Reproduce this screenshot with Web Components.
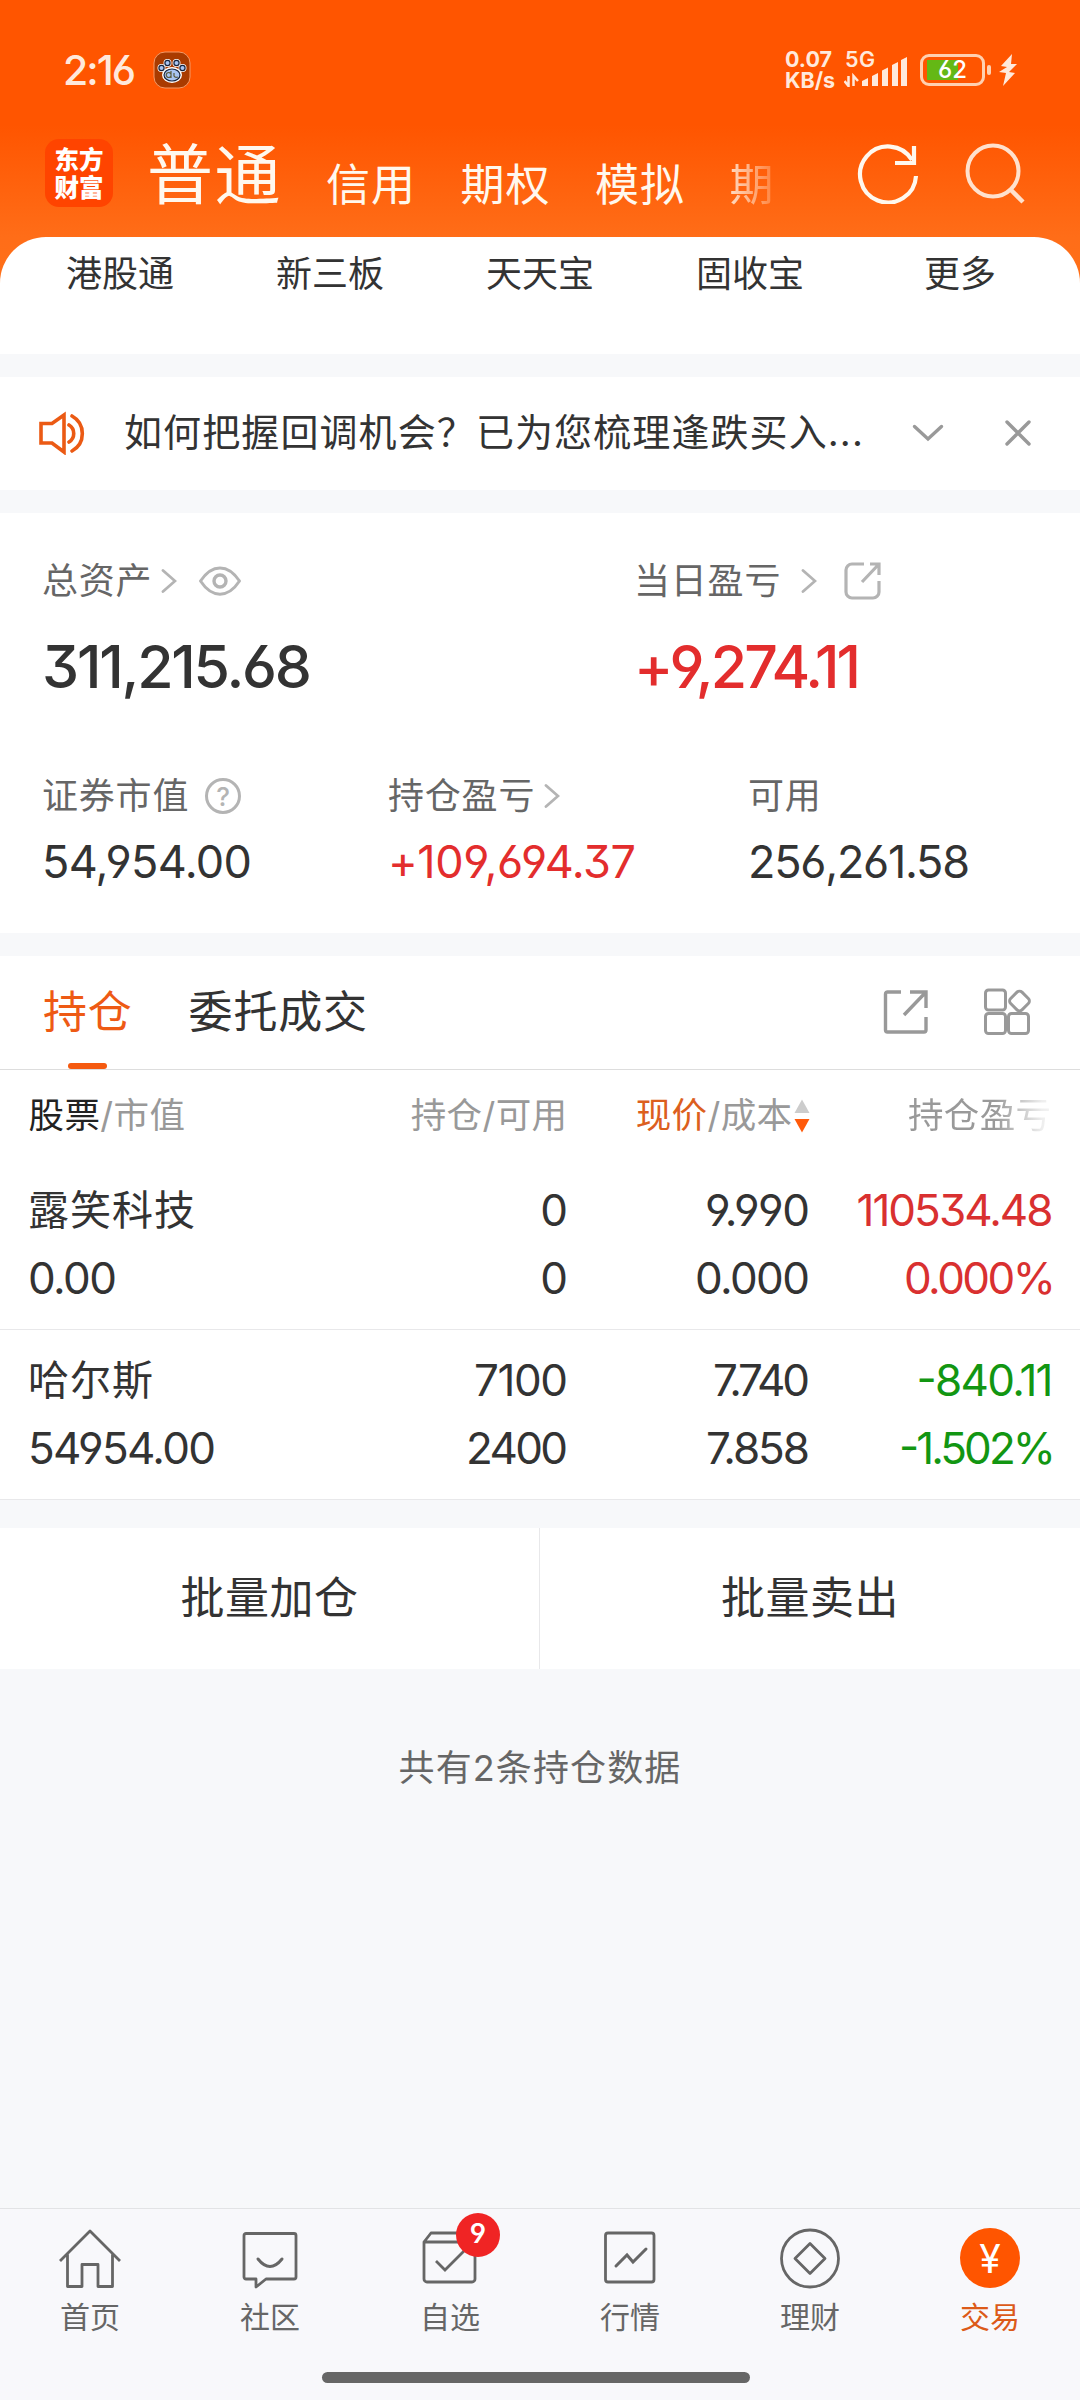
<!DOCTYPE html>
<html lang="zh-CN">
<head>
<meta charset="UTF-8">
<title>交易</title>
<style>
    html, body {
        margin: 0;
        padding: 0;
    }
    body {
        width: 1080px;
        height: 2400px;
        overflow: hidden;
        background: #f7f8fa;
        color: #333;
        font-family: Inter, "Noto Sans CJK SC", sans-serif;
        font-feature-settings: "cv03", "cv04", "cv09", "calt" 0;
    }
</style>
</head>
<body>
<trade-page></trade-page>

<script>
// Text that spreads its letters over a given width
class FitText extends HTMLElement {
    connectedCallback() {
        this.attachShadow({ mode: 'open' });
        this.shadowRoot.innerHTML = `
            <style>
                :host { display: inline-block; white-space: nowrap; }
                span { display: inline-block; }
            </style>
            <span><slot></slot></span>
        `;
        const width = Number(this.getAttribute('w'));
        const span = this.shadowRoot.querySelector('span');
        const count = this.textContent.length;
        if (width && count > 1) {
            const gap = (width - span.getBoundingClientRect().width) / (count - 1);
            span.style.letterSpacing = gap + 'px';
            span.style.marginRight = -gap + 'px';
        }
    }
}
customElements.define('fit-text', FitText);

const ICONS = {
    refresh: [62, 62, `<path d="M59 34A28 28 0 1 1 55 18M57 4V21H38" stroke-width="4.2"/>`],
    search: [62, 62, `<circle cx="28" cy="28" r="25.5" stroke-width="4"/><path d="M46 47L58 59" stroke-width="4.5"/>`],
    speaker: [50, 44, `<path d="M4 12.5H15L27 4V41L15 32H4ZM32 14A10 10 0 0 1 32 31M35 5A20 20 0 0 1 35 40" stroke-width="3.6" stroke-linecap="round"/>`],
    down: [32, 18, `<path d="M2.5 2.5L16 15L29.5 2.5" stroke-width="3.4" stroke-linecap="round"/>`],
    close: [28, 28, `<path d="M3 3L25 25M25 3L3 25" stroke-width="3.4" stroke-linecap="round"/>`],
    right: [16, 26, `<path d="M2 2.5L14 13L2 23.5" stroke-width="2.8" stroke-linecap="round"/>`],
    eye: [44, 32, `<path d="M2.5 16C14 -1.5 30 -1.5 41.5 16C30 33.5 14 33.5 2.5 16Z" stroke-width="3" stroke-linejoin="round"/><circle cx="22" cy="16" r="6" stroke-width="3.4"/>`],
    share: [38, 38, `<path d="M20 2H8A6 6 0 0 0 2 8V30A6 6 0 0 0 8 36H29A6 6 0 0 0 35 30V19M26 2H35V13M35 2L18 20" stroke-width="3.2"/>`],
    export: [46, 46, `<path d="M18 3H5A2 2 0 0 0 2.5 5V41A2 2 0 0 0 4.5 43H41A2 2 0 0 0 43 41V28M27 3H43V19M43 3L21 26" stroke-width="3.4"/>`],
    apps: [50, 50, `<g stroke-width="3"><rect x="3.5" y="3" width="20" height="20" rx="3"/><rect x="3.5" y="26.5" width="20" height="20" rx="3"/><rect x="26.5" y="26.5" width="20" height="20" rx="3"/><rect x="29.5" y="6" width="16" height="16" rx="3.5" transform="rotate(45 37.5 14)"/></g>`],
    sort: [16, 34, `<path d="M8 0.5L15.5 14H0.5Z" fill="#ccc" stroke="none"/><path d="M8 33.5L15.5 20H0.5Z" fill="#ff5a0a" stroke="none"/>`],
    home: [64, 64, `<path d="M2 35L32 5L62 35M9.5 28.5V60.5H24V38.5H40V60.5H54.5V28.5" stroke-linejoin="round"/>`],
    chat: [64, 64, `<path d="M8 7.5H56A2 2 0 0 1 58 9.5V51A2 2 0 0 1 56 53H28L18 61V53H8A2 2 0 0 1 6 51V9.5A2 2 0 0 1 8 7.5Z" stroke-linejoin="round"/><path d="M20 33Q32 48 44 33" stroke-width="3" stroke-linecap="round"/>`],
    pick: [64, 64, `<path d="M6 16H57V53A3 3 0 0 1 54 56H9A3 3 0 0 1 6 53ZM6 16L13 7H51L57 16" stroke-linejoin="round"/><path d="M18 35L27 44L46 25"/>`],
    chart: [64, 64, `<rect x="7.5" y="7" width="48.5" height="49" rx="2.5"/><path d="M18 40L29 29L35 36L48 23" stroke-width="3" stroke-linecap="round"/>`],
    wealth: [64, 64, `<circle cx="32" cy="32.5" r="28.5"/><path d="M32 17.5L47 32.5L32 47.5L17 32.5Z" stroke-linejoin="round"/>`],
    paw: [38, 38, `<rect x="1" y="1" width="36" height="36" rx="11" fill="#a93b00" stroke="#f39a68" stroke-width="1"/><g fill="#fff" stroke="#fff" stroke-width="4"><circle cx="8.5" cy="17" r="2"/><circle cx="14.5" cy="12" r="2"/><circle cx="23.5" cy="12" r="2"/><circle cx="29.5" cy="17" r="2"/><ellipse cx="19" cy="24" rx="8" ry="6"/></g><g fill="#a9c5f2" stroke="#17233c" stroke-width="1.2"><circle cx="8.500" cy="17" r="2.6"/><circle cx="14.5" cy="12" r="2.6"/><circle cx="23.5" cy="12" r="2.6"/><circle cx="29.5" cy="17" r="2.6"/><ellipse cx="19" cy="24" rx="8" ry="6"/></g><path d="M18 20V27M18 25A2.5 2.5 0 1 1 18 23M21 22V25Q22 27 25 26" stroke="#5a5a3c" stroke-width="1.2"/>`],
    signal: [64, 34, `<path d="M4.5 23V33L0.5 28M9.5 33V23L14 28" stroke-width="2.5"/><g fill="currentColor" stroke="none"><path d="M18 28L24 25V33H18ZM28 23L34 20V33H28ZM38 17.5L44 14.5V33H38ZM48 12L54 9V33H48ZM57 7L63 4V33H57Z"/></g>`],
    bolt: [20, 32, `<path d="M14 0L3 12L9 13L1 18L8 19L5 32L17 19L11 18L19 10L13 10Z" fill="currentColor" stroke="none"/>`]
};

class AppIcon extends HTMLElement {
    connectedCallback() {
        const [width, height, shape] = ICONS[this.getAttribute('name')];
        this.attachShadow({ mode: 'open' });
        this.shadowRoot.innerHTML = `
            <style>
                :host { display: block; flex: none; width: ${width}px; height: ${height}px; }
                svg { display: block; }
            </style>
            <svg width="${width}" height="${height}" viewBox="0 0 ${width} ${height}" fill="none" stroke="currentColor" stroke-width="2.8">${shape}</svg>
        `;
    }
}
customElements.define('app-icon', AppIcon);

class StatusBar extends HTMLElement {
    connectedCallback() {
        this.attachShadow({ mode: 'open' });
        this.shadowRoot.innerHTML = `
            <style>
                :host {
                    display: flex;
                    align-items: center;
                    height: 36px;
                    padding: 52px 62px 0 63px;
                    color: #ffe9dc;
                    line-height: 1;
                }
                .time { font-size: 41px; font-weight: 500; }
                .paw { margin-left: 17px; }
                .speed {
                    display: flex;
                    flex-direction: column;
                    margin-left: auto;
                    font-size: 21.5px;
                    font-weight: 700;
                    line-height: 21.5px;
                }
                .net {
                    display: grid;
                    margin-left: 9px;
                    width: 66px;
                }
                .net > * { grid-area: 1 / 1; }
                .net fit-text { font-size: 21.5px; font-weight: 600; margin: -4px 0 0 1px; }
                .battery {
                    display: flex;
                    align-items: center;
                    justify-content: center;
                    box-sizing: border-box;
                    width: 65px;
                    height: 32px;
                    margin-left: 10px;
                    border: 3px solid #ffd0b0;
                    border-radius: 9px;
                    background: linear-gradient(#64b815, #64b815) 4px 3px / 31px 20px no-repeat;
                    color: #fff;
                    font-size: 24px;
                    font-weight: 500;
                }
                .nub {
                    width: 4px;
                    height: 10px;
                    margin: 0 7px 0 2px;
                    border-radius: 2px;
                    background: #ffd0b0;
                }
            </style>
            <fit-text class="time" w="73">2:16</fit-text>
            <app-icon class="paw" name="paw"></app-icon>
            <div class="speed"><fit-text w="47">0.07</fit-text><fit-text w="50">KB/s</fit-text></div>
            <div class="net"><fit-text w="30">5G</fit-text><app-icon name="signal"></app-icon></div>
            <div class="battery"><fit-text w="29">62</fit-text></div>
            <div class="nub"></div>
            <app-icon name="bolt"></app-icon>
        `;
    }
}
customElements.define('status-bar', StatusBar);

class TopNav extends HTMLElement {
    connectedCallback() {
        this.attachShadow({ mode: 'open' });
        this.shadowRoot.innerHTML = `
            <style>
                :host {
                    display: flex;
                    align-items: flex-start;
                    height: 98px;
                    padding: 51px 53px 0 45px;
                    color: #fff8ee;
                }
                .logo {
                    width: 68px;
                    height: 61px;
                    padding-top: 7px;
                    border-radius: 14px;
                    background: #ff4400;
                    color: #fff;
                    font-size: 24.5px;
                    font-weight: 900;
                    line-height: 28px;
                    text-align: center;
                }
                nav {
                    display: flex;
                    align-items: flex-start;
                    width: 622px;
                    margin: -13px 0 0 34px;
                    white-space: nowrap;
                    font-size: 44px;
                    letter-spacing: 1px;
                    line-height: 98px;
                }
                .active { font-size: 66px; letter-spacing: 1.5px; margin-right: 44px; }
                .tab { margin: 10px 44.5px 0 0; }
                .cut {
                    margin-top: 10px;
                    background: linear-gradient(90deg, rgba(255, 248, 238, .8), rgba(255, 248, 238, .2));
                    -webkit-background-clip: text;
                    background-clip: text;
                    color: transparent;
                }
                .refresh { margin: 3px 0 0 88px; }
                .search { margin: 4px 0 0 auto; color: #ffe1cd; }
            </style>
            <div class="logo">东方<br>财富</div>
            <nav>
                <span class="active">普通</span>
                <span class="tab">信用</span>
                <span class="tab">期权</span>
                <span class="tab">模拟</span>
                <span class="cut">期</span>
            </nav>
            <app-icon class="refresh" name="refresh"></app-icon>
            <app-icon class="search" name="search"></app-icon>
        `;
    }
}
customElements.define('top-nav', TopNav);

class QuickMenu extends HTMLElement {
    connectedCallback() {
        this.attachShadow({ mode: 'open' });
        this.shadowRoot.innerHTML = `
            <style>
                :host {
                    display: grid;
                    grid-template-columns: repeat(5, 1fr);
                    height: 98px;
                    padding: 19px 15px 0;
                    border-radius: 46px 46px 0 0;
                    background: #fff;
                    font-size: 36px;
                    line-height: 36px;
                    text-align: center;
                }
            </style>
            <span>港股通</span><span>新三板</span><span>天天宝</span><span>固收宝</span><span>更多</span>
        `;
    }
}
customElements.define('quick-menu', QuickMenu);

class NoticeBar extends HTMLElement {
    connectedCallback() {
        this.attachShadow({ mode: 'open' });
        this.shadowRoot.innerHTML = `
            <style>
                :host {
                    display: flex;
                    align-items: center;
                    height: 111px;
                    margin: 23px 0;
                    padding: 0 48px 2px 37px;
                    background: #fff;
                    color: #999;
                }
                .speaker { color: #eb5a14; }
                .text {
                    width: 744px;
                    margin: -2px 0 0 37px;
                    color: #333;
                    font-size: 38px;
                    letter-spacing: 1.1px;
                    line-height: 56px;
                    white-space: nowrap;
                }
                .down { margin-left: auto; }
                .close { margin-left: 60px; }
            </style>
            <app-icon class="speaker" name="speaker"></app-icon>
            <span class="text"><slot></slot></span>
            <app-icon class="down" name="down"></app-icon>
            <app-icon class="close" name="close"></app-icon>
        `;
    }
}
customElements.define('notice-bar', NoticeBar);

class AssetItem extends HTMLElement {
    connectedCallback() {
        this.attachShadow({ mode: 'open' });
        this.shadowRoot.innerHTML = `
            <style>
                :host { display: block; }
                .label {
                    display: flex;
                    align-items: center;
                    height: 40px;
                    color: #666;
                    font-size: 36px;
                    line-height: 40px;
                    letter-spacing: .8px;
                }
                .value {
                    display: block;
                    margin-top: 26px;
                    font-size: 45px;
                    line-height: 40px;
                }
                :host([big]) .value {
                    margin-top: 41px;
                    font-size: 59px;
                    font-weight: 500;
                    line-height: 50px;
                }
                :host([up]) .value { color: #e32d2d; }
            </style>
            <div class="label">${this.getAttribute('label')}<slot></slot></div>
            <fit-text class="value" w="${this.getAttribute('w')}">${this.getAttribute('value')}</fit-text>
        `;
    }
}
customElements.define('asset-item', AssetItem);

class AssetPanel extends HTMLElement {
    connectedCallback() {
        this.attachShadow({ mode: 'open' });
        this.shadowRoot.innerHTML = `
            <style>
                :host {
                    display: block;
                    height: 372px;
                    padding: 48px 0 0 42px;
                    background: #fff;
                }
                .row { display: grid; }
                .total { grid-template-columns: 592px 1fr; }
                .detail { grid-template-columns: 346px 360px 1fr; margin-top: 84px; }
                app-icon { color: #b4b4b4; }
                .near { margin-left: 9px; }
                .eye { margin-left: 21px; }
                .far { margin-left: 20px; }
                .share { margin-left: 27px; }
                .help {
                    box-sizing: border-box;
                    width: 36px;
                    height: 36px;
                    margin-left: 16px;
                    border: 3px solid #b4b4b4;
                    border-radius: 50%;
                    color: #b4b4b4;
                    font-size: 26px;
                    font-weight: 500;
                    line-height: 31px;
                    letter-spacing: 0;
                    text-align: center;
                }
            </style>
            <div class="row total">
                <asset-item big label="总资产" value="311,215.68" w="270">
                    <app-icon class="near" name="right"></app-icon>
                    <app-icon class="eye" name="eye"></app-icon>
                </asset-item>
                <asset-item big up label="当日盈亏" value="+9,274.11" w="227">
                    <app-icon class="far" name="right"></app-icon>
                    <app-icon class="share" name="share"></app-icon>
                </asset-item>
            </div>
            <div class="row detail">
                <asset-item label="证券市值" value="54,954.00" w="210"><span class="help">?</span></asset-item>
                <asset-item up label="持仓盈亏" value="+109,694.37" w="248"><app-icon class="near" name="right"></app-icon></asset-item>
                <asset-item label="可用" value="256,261.58" w="222"></asset-item>
            </div>
        `;
    }
}
customElements.define('asset-panel', AssetPanel);

class PositionTabs extends HTMLElement {
    connectedCallback() {
        this.attachShadow({ mode: 'open' });
        this.shadowRoot.innerHTML = `
            <style>
                :host {
                    display: flex;
                    align-items: center;
                    box-sizing: border-box;
                    height: 114px;
                    margin-top: 23px;
                    padding: 0 48px 0 43px;
                    border-bottom: 1px solid #ddd;
                    background: #fff;
                    font-size: 44px;
                    letter-spacing: .8px;
                }
                .active { margin-right: 56px; color: #ee5a14; }
                .active::after {
                    content: "";
                    display: block;
                    width: 39px;
                    height: 6px;
                    margin: -6px auto 0;
                    border-radius: 3px;
                    background: #f55a10;
                }
                .active span, .tab { display: block; height: 113px; line-height: 113px; }
                app-icon { color: #999; margin-top: -2px; }
                .export { margin-left: auto; }
                .apps { margin-left: 53px; }
            </style>
            <div class="active"><span>持仓</span></div>
            <div class="tab">委托成交</div>
            <app-icon class="export" name="export"></app-icon>
            <app-icon class="apps" name="apps"></app-icon>
        `;
    }
}
customElements.define('position-tabs', PositionTabs);

class PositionRow extends HTMLElement {
    connectedCallback() {
        const cell = (name) => {
            const [text, width] = this.getAttribute(name).split('|');
            return `<fit-text w="${width || ''}">${text}</fit-text>`;
        };
        this.attachShadow({ mode: 'open' });
        this.shadowRoot.innerHTML = `
            <style>
                :host {
                    display: grid;
                    grid-template-columns: 300px 1fr 242px 242px;
                    grid-template-rows: 68px 68px;
                    box-sizing: border-box;
                    height: 170px;
                    padding: 16px 28px 0 28px;
                    border-bottom: 1px solid #e8e8ea;
                    background: #fff;
                    font-size: 44px;
                    line-height: 68px;
                    text-align: right;
                }
                .left { text-align: left; }
                .name { font-size: 41px; letter-spacing: 1px; line-height: 68px; }
                .gain {
                    margin-right: -1.5px;
                    color: #d93030;
                    font-feature-settings: "cv03", "cv04", "cv09", "calt" 0, "case";
                }
                .rate { margin-right: -4px; }
                :host([down]) .gain { color: #129612; }
            </style>
            <div class="left name">${this.getAttribute('name')}</div>
            <div>${cell('held')}</div>
            <div>${cell('price')}</div>
            <div class="gain">${cell('gain')}</div>
            <div class="left">${cell('worth')}</div>
            <div>${cell('usable')}</div>
            <div>${cell('cost')}</div>
            <div class="gain rate">${cell('rate')}</div>
        `;
    }
}
customElements.define('position-row', PositionRow);

class PositionTable extends HTMLElement {
    connectedCallback() {
        this.attachShadow({ mode: 'open' });
        this.shadowRoot.innerHTML = `
            <style>
                :host { display: block; background: #fff; }
                .head {
                    display: grid;
                    grid-template-columns: 300px 1fr 242px 242px;
                    height: 89px;
                    padding: 1px 28.5px 0;
                    color: #999;
                    font-size: 35.5px;
                    letter-spacing: .4px;
                    line-height: 90px;
                    text-align: right;
                }
                .left { text-align: left; }
                b { font-weight: 400; color: #222; }
                .sorted { display: flex; align-items: center; justify-content: flex-end; }
                .sorted b { color: #dc5f1e; }
                .sorted app-icon { margin-left: 1px; }
                .cut {
                    background: linear-gradient(90deg, #999 0, #999 185px, #eee 232px, #f4f4f4);
                    -webkit-background-clip: text;
                    background-clip: text;
                    color: transparent;
                }
            </style>
            <div class="head">
                <div class="left"><b>股票</b>/市值</div>
                <div>持仓/可用</div>
                <div class="sorted"><b>现价</b>/成本<app-icon name="sort"></app-icon></div>
                <div class="cut">持仓盈亏</div>
            </div>
            <position-row name="露笑科技" held="0" usable="0" price="9.990|105" cost="0.000|115"
                gain="110534.48|197" rate="0.000%|152" worth="0.00|89"></position-row>
            <position-row down name="哈尔斯" held="7100|94" usable="2400|102" price="7.740|97" cost="7.858|104"
                gain="-840.11|137" rate="-1.502%|157" worth="54954.00|188"></position-row>
        `;
    }
}
customElements.define('position-table', PositionTable);

class BatchActions extends HTMLElement {
    connectedCallback() {
        this.attachShadow({ mode: 'open' });
        this.shadowRoot.innerHTML = `
            <style>
                :host {
                    display: grid;
                    grid-template-columns: 540px 540px;
                    height: 141px;
                    margin-top: 28px;
                    background: #fff;
                    font-size: 44px;
                    letter-spacing: .5px;
                    line-height: 141px;
                    text-align: center;
                }
                div:first-of-type { box-sizing: border-box; border-right: 1px solid #e8e8ea; }
            </style>
            <div>批量加仓</div>
            <div>批量卖出</div>
        `;
    }
}
customElements.define('batch-actions', BatchActions);

class TabItem extends HTMLElement {
    connectedCallback() {
        const badge = this.getAttribute('badge');
        const icon = this.getAttribute('icon');
        this.attachShadow({ mode: 'open' });
        this.shadowRoot.innerHTML = `
            <style>
                :host {
                    display: flex;
                    flex-direction: column;
                    align-items: center;
                    width: 180px;
                    color: #666;
                }
                .icon { position: relative; width: 64px; height: 64px; }
                .label { margin-top: 11px; font-size: 30px; line-height: 32px; }
                .badge {
                    position: absolute;
                    left: 38px;
                    top: -13px;
                    width: 44px;
                    height: 44px;
                    border-radius: 50%;
                    background: #f02424;
                    color: #fff;
                    font-size: 27px;
                    font-weight: 600;
                    line-height: 41px;
                    text-align: center;
                }
                .coin {
                    width: 60px;
                    height: 60px;
                    margin: 2px;
                    border-radius: 50%;
                    background: #ff5500;
                    color: #fff;
                    font-size: 39px;
                    line-height: 62px;
                    text-align: center;
                }
                :host([active]) .label { color: #dc5a18; }
            </style>
            <div class="icon">
                ${icon === 'coin' ? '<div class="coin">¥</div>' : `<app-icon name="${icon}"></app-icon>`}
                ${badge ? `<div class="badge">${badge}</div>` : ''}
            </div>
            <div class="label"><slot></slot></div>
        `;
    }
}
customElements.define('tab-item', TabItem);

class TabBar extends HTMLElement {
    connectedCallback() {
        this.attachShadow({ mode: 'open' });
        this.shadowRoot.innerHTML = `
            <style>
                :host {
                    display: block;
                    box-sizing: border-box;
                    height: 192px;
                    border-top: 1px solid #e2e3e5;
                    background: #f8f8fb;
                }
                .items { display: flex; height: 146px; padding-top: 17px; }
                .handle { width: 428px; height: 11px; margin-left: 322px; border-radius: 6px; background: #666; }
            </style>
            <div class="items">
                <tab-item icon="home">首页</tab-item>
                <tab-item icon="chat">社区</tab-item>
                <tab-item icon="pick" badge="9">自选</tab-item>
                <tab-item icon="chart">行情</tab-item>
                <tab-item icon="wealth">理财</tab-item>
                <tab-item icon="coin" active>交易</tab-item>
            </div>
            <div class="handle"></div>
        `;
    }
}
customElements.define('tab-bar', TabBar);

class TradePage extends HTMLElement {
    connectedCallback() {
        this.attachShadow({ mode: 'open' });
        this.shadowRoot.innerHTML = `
            <style>
                :host {
                    display: flex;
                    flex-direction: column;
                    width: 1080px;
                    height: 2400px;
                    background: #f7f8fa;
                }
                .top { background: linear-gradient(#ff5500 125px, #ff6d18 237px, #ff7018 285px); }
                .count {
                    margin-top: 73px;
                    color: #666;
                    font-size: 36px;
                    letter-spacing: 1.1px;
                    line-height: 52px;
                    text-align: center;
                }
                tab-bar { margin-top: auto; }
            </style>
            <div class="top">
                <status-bar></status-bar>
                <top-nav></top-nav>
                <quick-menu></quick-menu>
            </div>
            <notice-bar>如何把握回调机会？已为您梳理逢跌买入...</notice-bar>
            <asset-panel></asset-panel>
            <position-tabs></position-tabs>
            <position-table></position-table>
            <batch-actions></batch-actions>
            <div class="count">共有2条持仓数据</div>
            <tab-bar></tab-bar>
        `;
    }
}
customElements.define('trade-page', TradePage);
</script>
</body>
</html>
